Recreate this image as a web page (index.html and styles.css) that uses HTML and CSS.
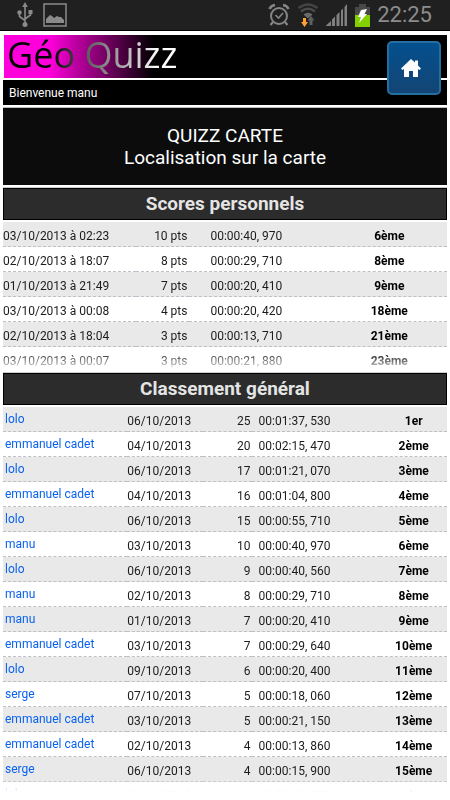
FILE: index.html
```html
<!DOCTYPE html>
<html lang="fr">
<head>
<meta charset="utf-8">
<meta name="viewport" content="width=device-width, initial-scale=1">
<title>Géo Quizz</title>
<link rel="stylesheet" href="styles.css">
</head>
<body>
<div class="status">
  <div class="status-group">
    <svg width="16" height="26" viewBox="0 0 16 26" fill="none" stroke="#8a8a8a" stroke-width="1.6">
      <path d="M8 3V23M2.500 11V14.500L8 18.500M13.500 10.500V13L8 17"/>
      <path d="M8 0L10.800 5H5.200Z" fill="#8a8a8a" stroke="none"/>
      <circle cx="8" cy="22.500" r="2.500" fill="#8a8a8a" stroke="none"/>
      <circle cx="2.500" cy="10.500" r="2.200" fill="#8a8a8a" stroke="none"/>
      <path d="M11.500 8H15.500V12H11.500Z" fill="#8a8a8a" stroke="none"/>
    </svg>
    <svg width="24" height="24" viewBox="0 0 24 24">
      <path d="M1 1H23V23H1Z" fill="none" stroke="#8a8a8a" stroke-width="1.500"/>
      <path d="M3 20V16L7 12L9 13L11 15L14 13L16 14L18 14L21 17V20Z" fill="#8a8a8a"/>
    </svg>
  </div>
  <div class="status-group status-right">
    <svg width="22" height="24" viewBox="0 0 22 24" fill="none" stroke="#858585">
      <circle cx="11" cy="13" r="8" stroke-width="2"/>
      <path d="M7.500 12L10.500 15L15 10" stroke-width="1.600"/>
      <path d="M1.500 6Q3 2.500 7 2M15 2Q19 2.500 20.500 6" stroke-width="2.600"/>
      <path d="M5 19L2.500 22M17 19L19.500 22" stroke-width="2.200"/>
    </svg>
    <svg width="22" height="24" viewBox="0 0 22 24" fill="none">
      <path d="M1.500 5Q11 -2 20.500 5" stroke="#444" stroke-width="2.600"/>
      <path d="M4 8.500Q11 3 18 8.500" stroke="#4c4c4c" stroke-width="2.400"/>
      <path d="M7 11.500Q11 8.500 15 11.500L11 15Z" fill="#6a6a6a" stroke="#6a6a6a"/>
      <path d="M6 15H9V19H11L7.500 24L4 19H6Z" fill="#ffa030"/>
      <path d="M12.500 22V17.500H10.500L14 13L17.500 17.500H15.500V22Z" fill="#606060"/>
    </svg>
    <svg width="22" height="22" viewBox="0 0 22 22" fill="#808080">
      <path d="M0 22V21.500L5 17V22ZM6 22V15.500L9 12.500V22ZM10.500 22V11L13.500 8V22ZM15 22V6.500L17 4.500V22ZM18.500 22V3L21 0V22Z"/>
    </svg>
    <svg width="15" height="23" viewBox="0 0 15 23">
      <path d="M4 0H11V3H15V11H0V3H4Z" fill="#484848"/>
      <path d="M0 11H15V23H0Z" fill="#82d000"/>
      <path d="M6 6L12 5L9.500 10H12L4 19L6 13H3Z" fill="#fff"/>
    </svg>
    <span class="clock">22:25</span>
  </div>
</div>

<main class="page">
  <header class="banner">
    <div class="brand"><h1 class="logo">Géo Quizz</h1></div>
    <p class="welcome">Bienvenue manu</p>
    <a class="home" href="#" aria-label="Accueil">
      <svg width="20" height="19" viewBox="0 0 20 19" fill="#fff">
        <path d="M10 0L14 3.500V1.500H17V6.500L20 9.500L18.500 11L17 10V18H12V12H8V18H3V10L1.500 11L0 9.500Z"/>
      </svg>
    </a>
  </header>

  <section class="intro">
    <p>QUIZZ CARTE</p>
    <p>Localisation sur la carte</p>
  </section>

  <h2 class="bar">Scores personnels</h2>
  <div class="list personal">
    <table>
      <colgroup><col class="p-date"><col class="p-points"><col class="p-time"><col class="p-rank"></colgroup>
      <tbody>
        <tr><td>03/10/2013 à 02:23</td><td class="points">10 pts</td><td class="time">00:00:40, 970</td><td class="rank">6ème</td></tr>
        <tr><td>02/10/2013 à 18:07</td><td class="points">8 pts</td><td class="time">00:00:29, 710</td><td class="rank">8ème</td></tr>
        <tr><td>01/10/2013 à 21:49</td><td class="points">7 pts</td><td class="time">00:00:20, 410</td><td class="rank">9ème</td></tr>
        <tr><td>03/10/2013 à 00:08</td><td class="points">4 pts</td><td class="time">00:00:20, 420</td><td class="rank">18ème</td></tr>
        <tr><td>02/10/2013 à 18:04</td><td class="points">3 pts</td><td class="time">00:00:13, 710</td><td class="rank">21ème</td></tr>
        <tr><td>03/10/2013 à 00:07</td><td class="points">3 pts</td><td class="time">00:00:21, 880</td><td class="rank">23ème</td></tr>
      </tbody>
    </table>
  </div>

  <h2 class="bar">Classement général</h2>
  <div class="list general">
    <table>
      <colgroup><col class="g-name"><col class="g-date"><col class="g-points"><col class="g-time"><col class="g-rank"></colgroup>
      <tbody>
        <tr><td class="name"><a href="#">lolo</a></td><td>06/10/2013</td><td class="points">25</td><td class="time">00:01:37, 530</td><td class="rank">1er</td></tr>
        <tr><td class="name"><a href="#">emmanuel cadet</a></td><td>04/10/2013</td><td class="points">20</td><td class="time">00:02:15, 470</td><td class="rank">2ème</td></tr>
        <tr><td class="name"><a href="#">lolo</a></td><td>06/10/2013</td><td class="points">17</td><td class="time">00:01:21, 070</td><td class="rank">3ème</td></tr>
        <tr><td class="name"><a href="#">emmanuel cadet</a></td><td>04/10/2013</td><td class="points">16</td><td class="time">00:01:04, 800</td><td class="rank">4ème</td></tr>
        <tr><td class="name"><a href="#">lolo</a></td><td>06/10/2013</td><td class="points">15</td><td class="time">00:00:55, 710</td><td class="rank">5ème</td></tr>
        <tr><td class="name"><a href="#">manu</a></td><td>03/10/2013</td><td class="points">10</td><td class="time">00:00:40, 970</td><td class="rank">6ème</td></tr>
        <tr><td class="name"><a href="#">lolo</a></td><td>06/10/2013</td><td class="points">9</td><td class="time">00:00:40, 560</td><td class="rank">7ème</td></tr>
        <tr><td class="name"><a href="#">manu</a></td><td>02/10/2013</td><td class="points">8</td><td class="time">00:00:29, 710</td><td class="rank">8ème</td></tr>
        <tr><td class="name"><a href="#">manu</a></td><td>01/10/2013</td><td class="points">7</td><td class="time">00:00:20, 410</td><td class="rank">9ème</td></tr>
        <tr><td class="name"><a href="#">emmanuel cadet</a></td><td>03/10/2013</td><td class="points">7</td><td class="time">00:00:29, 640</td><td class="rank">10ème</td></tr>
        <tr><td class="name"><a href="#">lolo</a></td><td>09/10/2013</td><td class="points">6</td><td class="time">00:00:20, 400</td><td class="rank">11ème</td></tr>
        <tr><td class="name"><a href="#">serge</a></td><td>07/10/2013</td><td class="points">5</td><td class="time">00:00:18, 060</td><td class="rank">12ème</td></tr>
        <tr><td class="name"><a href="#">emmanuel cadet</a></td><td>03/10/2013</td><td class="points">5</td><td class="time">00:00:21, 150</td><td class="rank">13ème</td></tr>
        <tr><td class="name"><a href="#">emmanuel cadet</a></td><td>02/10/2013</td><td class="points">4</td><td class="time">00:00:13, 860</td><td class="rank">14ème</td></tr>
        <tr><td class="name"><a href="#">serge</a></td><td>06/10/2013</td><td class="points">4</td><td class="time">00:00:15, 900</td><td class="rank">15ème</td></tr>
        <tr><td class="name"><a href="#">lolo</a></td><td>06/10/2013</td><td class="points">4</td><td class="time">00:00:19, 170</td><td class="rank">16ème</td></tr>
      </tbody>
    </table>
  </div>
</main>
</body>
</html>
```

FILE: styles.css
```css
* { box-sizing: border-box; }

body {
  margin: 0;
  height: 100vh;
  display: flex;
  flex-direction: column;
  background: #fff;
  color: #1c1c1c;
  font-family: Roboto, sans-serif;
  font-size: 12px;
}

h1, h2, p { margin: 0; font-weight: 400; }
a { text-decoration: none; }
svg { display: block; flex: none; }

/* Phone status bar */
.status {
  flex: none;
  display: flex;
  justify-content: space-between;
  align-items: center;
  height: 31px;
  padding: 0 18px 0 17px;
  background: #202020;
  border-bottom: 1px solid #000;
}
.status-group { display: flex; align-items: center; gap: 10px; }
.status-right { gap: 7px; }
.clock { color: #8c8c8c; font-size: 22px; line-height: 30px; }

.page {
  flex: 1;
  min-height: 0;
  display: flex;
  flex-direction: column;
  padding: 4px 3px 8px;
}

/* Banner */
.banner { flex: none; position: relative; margin-bottom: 3px; }
.brand {
  height: 43px;
  margin-left: 1px;
  background: linear-gradient(90deg, #ff00dc 0, #ff00dc 45px, #a8008f 80px, #000 150px);
}
.logo {
  width: max-content;
  padding-left: 3px;
  font-family: "Open Sans", sans-serif;
  font-size: 36px;
  line-height: 39px;
  color: transparent;
  background: linear-gradient(90deg, #000 0, #000 45px, #6c6c6c 90px, #fff 155px);
  -webkit-background-clip: text;
  background-clip: text;
}
.welcome {
  margin-top: 2px;
  padding: 1px 0 0 6px;
  background: #000;
  color: #fff;
  line-height: 24px;
}
.home {
  position: absolute;
  top: 6px;
  right: 6px;
  width: 54px;
  height: 54px;
  display: flex;
  align-items: center;
  justify-content: center;
  padding-right: 7px;
  border: 2px solid #246f9f;
  border-radius: 5px;
  background: linear-gradient(#04508f, #134574);
}

.intro {
  flex: none;
  margin-bottom: 3px;
  padding: 17px 0 16px;
  background: #0c0c0c;
  box-shadow: 0 -1px #bbb;
  color: #fff;
  font-size: 19px;
  line-height: 22px;
  text-align: center;
}

.bar {
  flex: none;
  height: 32px;
  background: #2c2c2c;
  border: 1px solid #000;
  box-shadow: 0 -1px #ccc;
  color: #e4e4e4;
  font-size: 19px;
  font-weight: 700;
  line-height: 30px;
  text-align: center;
}

/* Score lists */
.list { overflow: hidden; margin-top: 2px; }
.personal {
  flex: none;
  height: 148px;
  margin-bottom: 3px;
  -webkit-mask-image: linear-gradient(to top, transparent 2px, rgba(0, 0, 0, 0.4) 6px, #000 18px);
  mask-image: linear-gradient(to top, transparent 2px, rgba(0, 0, 0, 0.4) 6px, #000 18px);
}
.general {
  flex: 1;
  -webkit-mask-image: linear-gradient(to top, transparent, rgba(0, 0, 0, 0.2) 4px, #000 12px);
  mask-image: linear-gradient(to top, transparent, rgba(0, 0, 0, 0.2) 4px, #000 12px);
}

table { width: 100%; table-layout: fixed; border-collapse: separate; border-spacing: 0; }
td {
  height: 25px;
  padding: 3px 0 0;
  border-bottom: 1px dashed #bfbfc8;
  line-height: 16px;
  white-space: nowrap;
}
tr:nth-child(odd) td { background: #e9e9e9; }
td.points { text-align: right; }
td.rank { text-align: center; font-weight: 700; color: #000; }
td.name { padding: 0 0 1px 2px; }
td.name a { color: #0a62f0; }

.personal td { padding-top: 4px; }
.personal td.points { padding-right: 2px; }
.personal td.time { padding-left: 21px; }
.general td.points { padding-right: 1px; }
.general td.time { padding-left: 7px; }

.p-date { width: 30%; }
.p-points { width: 12%; }
.p-time { width: 32%; }
.p-rank { width: 26%; }

.g-name { width: 28%; }
.g-date { width: 17%; }
.g-points { width: 11%; }
.g-time { width: 29%; }
.g-rank { width: 15%; }
```
